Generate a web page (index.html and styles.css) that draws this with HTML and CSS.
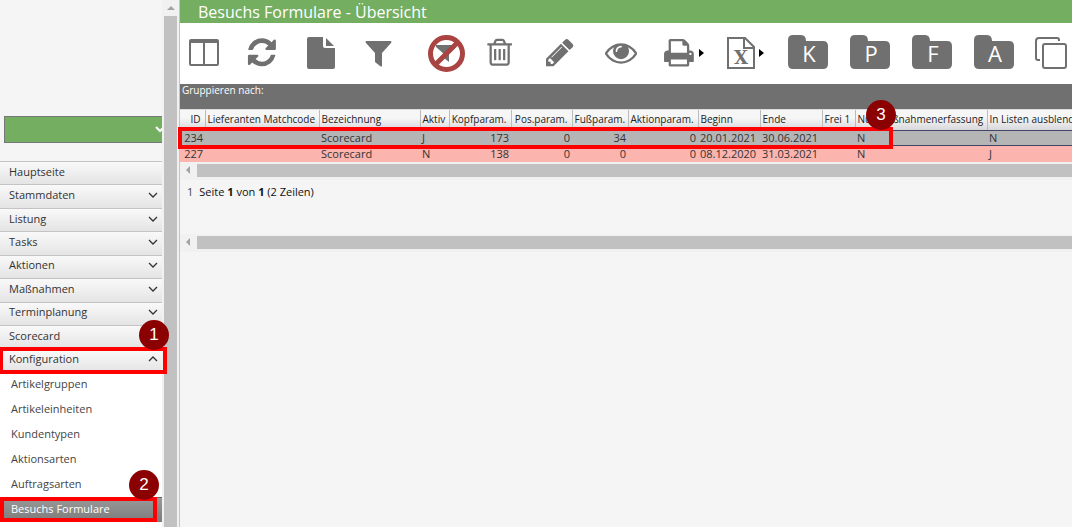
FILE: index.html
```html
<!DOCTYPE html>
<html lang="de">
<head>
<meta charset="utf-8">
<title>Besuchs Formulare - Übersicht</title>
<link rel="stylesheet" href="styles.css">
</head>
<body>
<div class="app">
  <aside class="sidebar">
    <div class="sidebar-head">
      <button class="client" type="button" aria-label="Auswahl"><svg class="client-arrow" width="12" height="8" viewBox="0 0 12 8"><path d="M2 1l4 4 4-4" fill="none" stroke="#fff" stroke-width="2"/></svg></button>
    </div>
    <nav>
      <ul class="menu">
        <li><a href="#">Hauptseite</a></li>
        <li><a href="#">Stammdaten<svg class="chev" viewBox="0 0 10 6"><path d="M1 1l4 4 4-4"/></svg></a></li>
        <li><a href="#">Listung<svg class="chev" viewBox="0 0 10 6"><path d="M1 1l4 4 4-4"/></svg></a></li>
        <li><a href="#">Tasks<svg class="chev" viewBox="0 0 10 6"><path d="M1 1l4 4 4-4"/></svg></a></li>
        <li><a href="#">Aktionen<svg class="chev" viewBox="0 0 10 6"><path d="M1 1l4 4 4-4"/></svg></a></li>
        <li><a href="#">Maßnahmen<svg class="chev" viewBox="0 0 10 6"><path d="M1 1l4 4 4-4"/></svg></a></li>
        <li><a href="#">Terminplanung<svg class="chev" viewBox="0 0 10 6"><path d="M1 1l4 4 4-4"/></svg></a></li>
        <li><a href="#">Scorecard</a></li>
        <li class="marked"><a href="#">Konfiguration<svg class="chev" viewBox="0 0 10 6"><path d="M1 5l4-4 4 4"/></svg></a><span class="frame frame-menu"></span><span class="badge badge-menu">1</span></li>
      </ul>
      <ul class="submenu">
        <li><a href="#">Artikelgruppen</a></li>
        <li><a href="#">Artikeleinheiten</a></li>
        <li><a href="#">Kundentypen</a></li>
        <li><a href="#">Aktionsarten</a></li>
        <li><a href="#">Auftragsarten</a></li>
        <li class="marked"><a class="current" href="#">Besuchs Formulare</a><span class="frame frame-sub"></span><span class="badge badge-sub">2</span></li>
      </ul>
    </nav>
  </aside>
  <div class="vscroll"><svg class="up" viewBox="0 0 8 4"><path d="M0 4l4-4 4 4z"/></svg><div class="vthumb"></div></div>
  <main class="main">
    <h1 class="title">Besuchs Formulare - Übersicht</h1>
    <div class="toolbar">
      <div class="tools tools-near">
        <button type="button" aria-label="Spalten"><svg viewBox="0 0 40 40"><path fill-rule="evenodd" d="M7 6h26q2 0 2 2v23q0 2-2 2H7q-2 0-2-2V8q0-2 2-2zM7 10v21h12V10zM21 10v21h12V10z"/></svg></button>
        <button type="button" aria-label="Aktualisieren"><svg viewBox="0 0 40 40"><path transform="translate(3.6 3) scale(.0182)" d="M1639 1056q0 5-1 7-64 268-268 434.500t-478 166.500q-146 0-282.500-55t-243.500-157l-129 129q-19 19-45 19t-45-19-19-45v-448q0-26 19-45t45-19h448q26 0 45 19t19 45-19 45l-137 137q71 66 161 102t187 36q134 0 250-65t186-179q11-17 53-117 8-23 30-23h192q13 0 22.500 9.500t9.500 22.500zm25-800v448q0 26-19 45t-45 19h-448q-26 0-45-19t-19-45 19-45l138-138q-148-137-349-137-134 0-250 65t-186 179q-11 17-53 117-8 23-30 23h-199q-13 0-22.500-9.500t-9.500-22.500v-7q65-268 270-434.500t480-166.500q146 0 284 55.500t245 156.500l130-129q19-19 45-19t45 19 19 45z"/></svg></button>
        <button type="button" aria-label="Neu"><svg viewBox="0 0 40 40"><path d="M9 4h14v9q0 2 2 2h10v19q0 2-2 2H9q-2 0-2-2V6q0-2 2-2z"/><path d="M26 5l8 8h-8z"/></svg></button>
        <button type="button" aria-label="Filter"><svg viewBox="0 0 40 40"><path d="M8 8h25q1 1 0 2l-9 10v13q0 1-2 0l-5-4v-9L8 10q-1-1 0-2z"/></svg></button>
      </div>
      <div class="tools tools-filter">
        <button type="button" aria-label="Filter löschen"><svg viewBox="0 0 40 40"><path d="M10 12h20v2l-7 7v8l-5-4v-4l-8-7z"/><circle cx="20.500" cy="20.500" r="16" fill="none" stroke="#a94442" stroke-width="5"/><path d="M9.500 31.500l22-22" stroke="#a94442" stroke-width="5"/></svg></button>
        <button type="button" aria-label="Löschen"><svg viewBox="0 0 40 40"><path transform="translate(3.900 3.500) scale(.0176)" d="M704 736v576q0 14-9 23t-23 9h-64q-14 0-23-9t-9-23v-576q0-14 9-23t23-9h64q14 0 23 9t9 23zm256 0v576q0 14-9 23t-23 9h-64q-14 0-23-9t-9-23v-576q0-14 9-23t23-9h64q14 0 23 9t9 23zm256 0v576q0 14-9 23t-23 9h-64q-14 0-23-9t-9-23v-576q0-14 9-23t23-9h64q14 0 23 9t9 23zm128 724v-948h-896v948q0 22 7 40.500t14.500 27 10.500 8.500h832q3 0 10.500-8.500t14.500-27 7-40.500zm-672-1076h448l-48-117q-7-9-17-11h-317q-10 2-17 11zm928 32v64q0 14-9 23t-23 9h-96v948q0 83-47 143.500t-113 60.500h-832q-66 0-113-58.500t-47-141.500v-952h-96q-14 0-23-9t-9-23v-64q0-14 9-23t23-9h309l70-167q15-37 54-63t79-26h320q40 0 79 26t54 63l70 167h309q14 0 23 9t9 23z"/></svg></button>
      </div>
      <div class="tools tools-edit">
        <button type="button" aria-label="Bearbeiten"><svg viewBox="0 0 40 40"><path transform="translate(3.700 3.300) scale(.0180)" d="M491 1536l91-91-235-235-91 91v107h128v128h107zm523-928q0-22-22-22-10 0-17 7l-542 542q-7 7-7 17 0 22 22 22 10 0 17-7l542-542q7-7 7-17zm-54-192l416 416-832 832h-416v-416zm683 96q0 53-37 90l-166 166-416-416 166-165q36-38 90-38 53 0 91 38l235 234q37 39 37 91z"/></svg></button>
        <button type="button" aria-label="Anzeigen"><svg viewBox="0 0 40 40"><path transform="translate(5 3.300) scale(.0179)" d="M1664 960q-152-236-381-353 61 104 61 225 0 185-131.500 316.500t-316.500 131.500-316.500-131.500-131.500-316.500q0-121 61-225-229 117-381 353 133 205 333.500 326.500t434.500 121.500 434.500-121.500 333.500-326.500zm-720-384q0-20-14-34t-34-14q-125 0-214.500 89.500t-89.500 214.500q0 20 14 34t34 14 34-14 14-34q0-86 61-147t147-61q20 0 34-14t14-34zm848 384q0 34-20 69-140 230-376.500 368.500t-499.500 138.500-499.500-139-376.500-368q-20-35-20-69t20-69q140-229 376.500-368t499.500-139 499.500 139 376.500 368q20 35 20 69z"/></svg></button>
        <button type="button" aria-label="Drucken"><svg viewBox="0 0 40 40"><path transform="translate(2.900 3.700) scale(.0179)" d="M448 1536h896v-256h-896v256zm0-640h896v-384h-160q-40 0-68-28t-28-68v-160h-640v640zm1152 64q0-26-19-45t-45-19-45 19-19 45 19 45 45 19 45-19 19-45zm128 0v416q0 13-9.500 22.500t-22.500 9.500h-224v160q0 40-28 68t-68 28h-960q-40 0-68-28t-28-68v-160h-224q-13 0-22.500-9.500t-9.500-22.500v-416q0-79 56.500-135.500t135.500-56.500h64v-544q0-40 28-68t68-28h672q40 0 88 20t76 48l152 152q28 28 48 76t20 88v256h64q79 0 135.500 56.500t56.500 135.500z"/><path fill="#000" d="M39 16l5 4-5 4z"/></svg></button>
        <button type="button" aria-label="Excel-Export"><svg viewBox="0 0 40 40"><path d="M8 5h17l9 9v21H8zM24 5v10h10" fill="none" stroke="#707070" stroke-width="2"/><text x="21" y="31" text-anchor="middle" class="xls">X</text><path fill="#000" d="M39 16l5 4-5 4z"/></svg></button>
      </div>
      <div class="tools tools-folder">
        <button type="button" aria-label="Kopfparameter"><svg viewBox="0 0 40 40"><path d="M5 2h8q5 0 5 6h17q5 0 5 5v18q0 5-5 5H5q-5 0-5-5V7q0-5 5-5z"/><text x="21" y="29" text-anchor="middle" class="letter">K</text></svg></button>
        <button type="button" aria-label="Positionsparameter"><svg viewBox="0 0 40 40"><path d="M5 2h8q5 0 5 6h17q5 0 5 5v18q0 5-5 5H5q-5 0-5-5V7q0-5 5-5z"/><text x="21" y="29" text-anchor="middle" class="letter">P</text></svg></button>
        <button type="button" aria-label="Fußparameter"><svg viewBox="0 0 40 40"><path d="M5 2h8q5 0 5 6h17q5 0 5 5v18q0 5-5 5H5q-5 0-5-5V7q0-5 5-5z"/><text x="21" y="29" text-anchor="middle" class="letter">F</text></svg></button>
        <button type="button" aria-label="Aktionsparameter"><svg viewBox="0 0 40 40"><path d="M5 2h8q5 0 5 6h17q5 0 5 5v18q0 5-5 5H5q-5 0-5-5V7q0-5 5-5z"/><text x="21" y="29" text-anchor="middle" class="letter">A</text></svg></button>
      </div>
      <div class="tools tools-near">
        <button type="button" aria-label="Kopieren"><svg viewBox="0 0 40 40"><g fill="none" stroke="#707070" stroke-width="2"><path d="M27 8V7q0-2-2-2H7Q4 5 4 8v17q0 2 2 2h2"/><rect x="11" y="11" width="23" height="24" rx="2"/></g></svg></button>
      </div>
    </div>
    <div class="grouping">Gruppieren nach:</div>
    <div class="grid">
      <div class="grid-view">
        <table>
          <colgroup><col class="c25"><col class="c114"><col class="c101"><col class="c29"><col class="c62"><col class="c61"><col class="c56"><col class="c70"><col class="c62"><col class="c62"><col class="c33"><col class="c132"><col class="c114"></colgroup>
          <thead>
            <tr><th class="num">ID</th><th>Lieferanten Matchcode</th><th>Bezeichnung</th><th>Aktiv</th><th class="num">Kopfparam.</th><th class="num">Pos.param.</th><th class="num">Fußparam.</th><th class="num">Aktionparam.</th><th>Beginn</th><th>Ende</th><th>Frei 1</th><th>Nur Maßnahmenerfassung</th><th>In Listen ausblenden</th></tr>
          </thead>
          <tbody>
            <tr class="selected"><td class="num">234</td><td></td><td>Scorecard</td><td>J</td><td class="num">173</td><td class="num">0</td><td class="num">34</td><td class="num">0</td><td>20.01.2021</td><td>30.06.2021</td><td></td><td>N</td><td>N</td></tr>
            <tr class="expired"><td class="num">227</td><td></td><td>Scorecard</td><td>N</td><td class="num">138</td><td class="num">0</td><td class="num">0</td><td class="num">0</td><td>08.12.2020</td><td>31.03.2021</td><td></td><td>N</td><td>J</td></tr>
          </tbody>
        </table>
      </div>
      <span class="frame frame-row"></span><span class="badge badge-row">3</span>
    </div>
    <div class="hscroll"><svg class="left" viewBox="0 0 4 8"><path d="M4 0L0 4l4 4z"/></svg><div class="hthumb"></div></div>
    <div class="pager"><span class="page">1</span><span>Seite <b>1</b> von <b>1</b> (2 Zeilen)</span></div>
    <div class="hscroll"><svg class="left" viewBox="0 0 4 8"><path d="M4 0L0 4l4 4z"/></svg><div class="hthumb"></div></div>
  </main>
</div>
</body>
</html>
```

FILE: styles.css
```css
* { box-sizing: border-box; }
html, body { height: 100%; }
body {
  margin: 0;
  overflow: hidden;
  background: #f5f5f5;
  color: #333;
  font: 11px/16px "Open Sans", "Noto Sans", sans-serif;
}
.app { display: flex; min-height: 100%; }

.sidebar { flex: none; width: 162px; display: flex; flex-direction: column; }
.sidebar-head { padding: 116px 0 18px 4px; }
.client {
  display: flex;
  align-items: center;
  justify-content: flex-end;
  width: 100%;
  height: 27px;
  padding: 0;
  overflow: hidden;
  border: 1px solid #777;
  border-right: 0;
  background: #74ae61;
}
.client-arrow { flex: none; margin-right: -4px; }
nav { flex: 1; display: flex; flex-direction: column; }
ul { margin: 0; padding: 0; list-style: none; }
a { color: inherit; text-decoration: none; }
.menu { display: grid; grid-template-rows: repeat(9, 1fr); height: 211px; }
.menu a {
  display: flex;
  align-items: center;
  justify-content: space-between;
  height: 100%;
  padding: 0 4px 3px 9px;
  border-top: 1px solid #c4c4c4;
  background: linear-gradient(#f9f9f9, #e4e4e4);
}
.chev { width: 10px; height: 6px; fill: none; stroke: #333; stroke-width: 1.3; }
.submenu { flex: 1; background: #fff; }
.submenu a { display: block; padding: 4px 11px 5px; color: #444; }
.submenu .current {
  background: linear-gradient(#999, #7c7c7c);
  border-top: 1px solid #666;
  padding: 3px 11px 5px;
  color: #fff;
  font-weight: 500;
}
.marked { position: relative; }

.frame { position: absolute; z-index: 2; border: 4px solid #f00; pointer-events: none; }
.frame-menu { inset: -2px -5px -2px -1px; }
.frame-sub { inset: 0 5px 0 0; }
.frame-row { left: -2px; top: 17px; width: 715px; height: 22px; }
.badge {
  position: absolute;
  z-index: 3;
  width: 30px;
  height: 30px;
  border-radius: 50%;
  background: #8b0000;
  color: #fff;
  font: 17px/30px "Liberation Sans", sans-serif;
  text-align: center;
}
.badge-menu { right: -7px; top: -29px; }
.badge-sub { right: 3px; top: -27px; }
.badge-row { left: 686px; top: -10px; }

.vscroll {
  flex: none;
  width: 18px;
  display: flex;
  flex-direction: column;
  align-items: center;
  padding-top: 6px;
  border-right: 1px solid #c4c4c4;
  background: #f1f1f1;
}
.up { width: 8px; height: 4px; fill: #a3a3a3; }
.vthumb { flex: 1; width: 13px; margin-top: 6px; background: #c1c1c1; }

.main { flex: 1; min-width: 0; }
.title {
  margin: 0;
  height: 23px;
  padding-left: 18px;
  background: #74ae61;
  color: #fff;
  font-size: 16px;
  font-weight: 400;
  line-height: 24px;
}
.toolbar { display: flex; padding: 10px 0 11px 4px; overflow: hidden; background: #fff; }
.tools { flex: none; display: flex; }
.tools button { flex: none; width: 40px; height: 40px; padding: 0; border: 0; background: none; }
.tools svg { display: block; width: 40px; height: 40px; overflow: visible; fill: #707070; }
.tools-near { gap: 18px; }
.tools-filter { gap: 14px; margin-left: 28px; }
.tools-edit { gap: 20px; margin-left: 20px; }
.tools-folder { gap: 22px; margin: 0 18px 0 28px; }
.xls { font: bold 18px "DejaVu Serif", serif; }
.letter { font: 22px "Open Sans", sans-serif; fill: #fff; }
.grouping {
  height: 26px;
  padding: 0 2px;
  line-height: 13px;
  border-bottom: 1px solid #ddd;
  background: #707070;
  color: #fff;
  font-weight: 500;
  font-size: 10px;
}

.grid { position: relative; }
.grid-view { overflow: hidden; }
table { width: 921px; min-width: 100%; table-layout: fixed; border-collapse: collapse; }
.c25 { width: 25px; }
.c29 { width: 29px; }
.c33 { width: 33px; }
.c56 { width: 56px; }
.c61 { width: 61px; }
.c62 { width: 62px; }
.c70 { width: 70px; }
.c101 { width: 101px; }
.c114 { width: 114px; }
.c132 { width: 132px; }
th, td { padding: 0 2px; overflow: hidden; white-space: nowrap; text-align: left; line-height: 14px; }
th {
  height: 20px;
  padding: 0 4px 3px 2px;
  border-right: 1px solid #bbb;
  background: linear-gradient(#f6f6f6 40%, #d8d8dc);
  color: #222;
  font-weight: 500;
  font-size: 10px;
}
th:not(.num) { padding-right: 0; }
td { height: 16px; }
.num { text-align: right; }
.selected { background: #b5b5b5; box-shadow: inset 0 1px #446, inset 0 -1px #446; }
.expired { background: #fbb4ae; }

.hscroll { display: flex; align-items: center; height: 18px; padding: 0 0 2px 6px; background: #f1f1f1; }
.left { width: 4px; height: 8px; fill: #a3a3a3; }
.hthumb { flex: 1; height: 13px; margin-left: 7px; background: #c1c1c1; }
.pager { display: flex; gap: 6px; height: 54px; padding: 4px 7px; color: #111; }
.page { color: #444; }
```
